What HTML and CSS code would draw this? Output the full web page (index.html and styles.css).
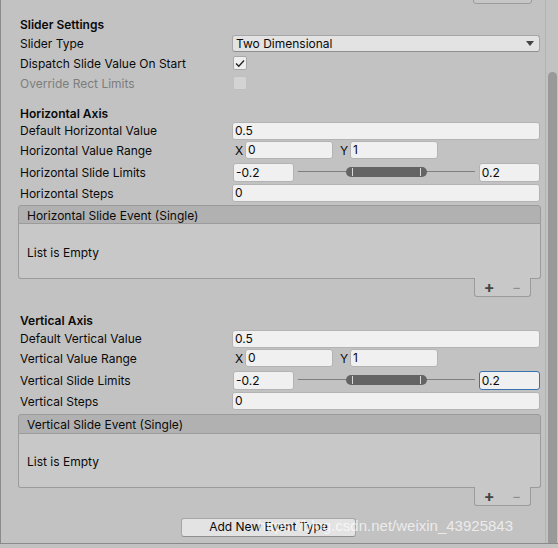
FILE: index.html
```html
<!DOCTYPE html>
<html lang="en">
<head>
    <meta charset="UTF-8">
    <title>Slider Settings</title>
    <link rel="stylesheet" href="styles.css">
</head>
<body>
    <div class="inspector">
        <div class="top-button"></div>

        <div class="content">
            <div class="section-title first">Slider Settings</div>
            <div class="row">
                <div class="label">Slider Type</div>
                <div class="dropdown">
                    <span>Two Dimensional</span>
                    <span class="arrow"></span>
                </div>
            </div>
            <div class="row">
                <div class="label">Dispatch Slide Value On Start</div>
                <div class="checkbox">
                    <svg width="10" height="9" viewBox="0 0 10 9"><path d="M1 4.5 L3.8 7.2 L9 1.5" fill="none" stroke="#222" stroke-width="1.3"/></svg>
                </div>
            </div>
            <div class="row">
                <div class="label disabled">Override Rect Limits</div>
                <div class="checkbox off"></div>
            </div>

            <!-- horizontal -->
            <div class="section-title axis">Horizontal Axis</div>
            <div class="row field-row">
                <div class="label">Default Horizontal Value</div>
                <div class="field wide">0.5</div>
            </div>
            <div class="row">
                <div class="label">Horizontal Value Range</div>
                <div class="range">
                    <span class="axis-letter">X</span><div class="field small">0</div>
                    <span class="axis-letter y">Y</span><div class="field small">1</div>
                </div>
            </div>
            <div class="row limits">
                <div class="label">Horizontal Slide Limits</div>
                <div class="field num">-0.2</div>
                <div class="minmax">
                    <div class="track"></div>
                    <div class="thumb"><i></i><i></i></div>
                </div>
                <div class="field num">0.2</div>
            </div>
            <div class="row">
                <div class="label">Horizontal Steps</div>
                <div class="field wide">0</div>
            </div>

            <div class="event">
                <div class="event-header">Horizontal Slide Event (Single)</div>
                <div class="event-body">List is Empty</div>
                <div class="event-footer"><span class="plus">+</span><span class="minus">&minus;</span></div>
            </div>

            <!-- vertical -->
            <div class="section-title axis vertical">Vertical Axis</div>
            <div class="row field-row">
                <div class="label">Default Vertical Value</div>
                <div class="field wide">0.5</div>
            </div>
            <div class="row">
                <div class="label">Vertical Value Range</div>
                <div class="range">
                    <span class="axis-letter">X</span><div class="field small">0</div>
                    <span class="axis-letter y">Y</span><div class="field small">1</div>
                </div>
            </div>
            <div class="row limits">
                <div class="label">Vertical Slide Limits</div>
                <div class="field num">-0.2</div>
                <div class="minmax">
                    <div class="track"></div>
                    <div class="thumb"><i></i><i></i></div>
                </div>
                <div class="field num focused">0.2</div>
            </div>
            <div class="row">
                <div class="label">Vertical Steps</div>
                <div class="field wide">0</div>
            </div>

            <div class="event second">
                <div class="event-header">Vertical Slide Event (Single)</div>
                <div class="event-body">List is Empty</div>
                <div class="event-footer"><span class="plus">+</span><span class="minus">&minus;</span></div>
            </div>

            <div class="add-button">Add New Event Type</div>
        </div>

        <div class="scrollbar"><div class="scroll-thumb"></div></div>
        <div class="watermark">https://blog.csdn.net/weixin_43925843</div>
    </div>
</body>
</html>
```

FILE: styles.css
```css
body {
    margin: 0;
    padding: 0;
    background-color: #c2c2c2;
    font-family: Inter, "Noto Sans", sans-serif;
    font-size: 12px;
    color: #0a0a0a;
}

.inspector {
    position: relative;
    width: 557px;
    height: 543px;
    border-left: 1px solid #8a8a8a;
    border-bottom: 1px solid #8a8a8a;
    overflow: hidden;
}

.top-button {
    position: absolute;
    top: -10px;
    left: 472px;
    width: 57px;
    height: 12px;
    border: 1px solid #9c9c9c;
    border-radius: 3px;
    background-color: #c6c6c6;
}

.content {
    width: 520px;
    padding: 15px 0 0 19px;
}

.section-title {
    font-weight: 600;
    height: 18px;
    line-height: 20px;
}

.section-title.axis {
    margin-top: 11px;
    height: 17px;
}

.section-title.vertical {
    margin-top: 14px;
    height: 18px;
}

.row {
    display: flex;
    align-items: center;
    height: 20px;
}

.row.field-row {
    height: 19px;
}

.row.limits {
    height: 22px;
    margin-top: 1px;
}

.label {
    width: 212px;
    flex-shrink: 0;
    white-space: nowrap;
}

.label.disabled {
    color: #7d7d7d;
}

.dropdown {
    flex: 1;
    height: 15px;
    display: flex;
    align-items: center;
    justify-content: space-between;
    padding: 0 5px 0 3px;
    background-color: #e3e3e3;
    border: 1px solid #a6a6a6;
    border-bottom-color: #8f8f8f;
    border-radius: 3px;
}

.arrow {
    width: 0;
    height: 0;
    border-left: 4px solid transparent;
    border-right: 4px solid transparent;
    border-top: 5px solid #444;
}

.checkbox {
    width: 12px;
    height: 12px;
    margin-left: 1px;
    background-color: #efefef;
    border: 1px solid #a8a8a8;
    border-radius: 2px;
    display: flex;
    align-items: center;
    justify-content: center;
}

.checkbox.off {
    background-color: #d3d3d3;
    border-color: #c0c0c0;
}

.field {
    height: 16px;
    line-height: 16px;
    padding-left: 2px;
    background-color: #f0f0f0;
    border: 1px solid #b3b3b3;
    border-radius: 3px;
    box-sizing: content-box;
}

.field.wide {
    flex: 1;
}

.range {
    display: flex;
    align-items: center;
}

.axis-letter {
    width: 12px;
    text-align: center;
    margin-left: 1px;
}

.axis-letter.y {
    margin-left: 5px;
}

.field.small {
    width: 84px;
}

.field.num {
    width: 58px;
    height: 17px;
    line-height: 17px;
    margin-left: 1px;
}

.field.focused {
    border-color: #3a72b0;
}

.minmax {
    position: relative;
    width: 179px;
    height: 12px;
    margin: 0 3px 0 4px;
}

.track {
    position: absolute;
    left: 0;
    right: 0;
    top: 5px;
    height: 1px;
    background-color: #7e7e7e;
}

.thumb {
    position: absolute;
    left: 48px;
    width: 81px;
    top: 1px;
    height: 10px;
    border-radius: 5px;
    background-color: #646464;
}

.thumb i {
    position: absolute;
    top: 1px;
    width: 1px;
    height: 8px;
    background-color: #d8d8d8;
    left: 6px;
}

.thumb i + i {
    left: auto;
    right: 6px;
}

.event {
    margin: 2px 0 0 -2px;
    width: 523px;
}

.event.second {
    margin-top: 3px;
}

.event-header {
    height: 17px;
    line-height: 19px;
    padding-left: 8px;
    background-color: #b1b1b1;
    border: 1px solid #9b9b9b;
    border-radius: 3px 3px 0 0;
}

.event.second .event-header {
    height: 18px;
}

.event-body {
    height: 54px;
    line-height: 58px;
    padding-left: 8px;
    background-color: #c8c8c8;
    border: 1px solid #9b9b9b;
    border-top: none;
    border-radius: 0 0 3px 3px;
}

.event.second .event-body {
    height: 53px;
    line-height: 55px;
}

.event-footer {
    width: 55px;
    height: 18px;
    margin: -1px 0 0 456px;
    display: flex;
    align-items: center;
    justify-content: space-around;
    background-color: #c8c8c8;
    border: 1px solid #9b9b9b;
    border-top: none;
    border-radius: 0 0 3px 3px;
    position: relative;
}

.plus {
    font-size: 16px;
    font-weight: 700;
    color: #444;
    line-height: 1;
}

.minus {
    font-size: 14px;
    color: #8f8f8f;
    line-height: 1;
}

.add-button {
    width: 173px;
    height: 17px;
    line-height: 16px;
    margin: 12px 0 0 161px;
    text-align: center;
    background-color: #e3e3e3;
    border: 1px solid #a6a6a6;
    border-bottom-color: #8f8f8f;
    border-radius: 3px;
}

.scrollbar {
    position: absolute;
    top: 0;
    left: 544px;
    width: 12px;
    height: 543px;
    border-left: 1px solid #b4b4b4;
    background-color: #c2c2c2;
}

.scroll-thumb {
    position: absolute;
    top: 72px;
    left: 2px;
    width: 9px;
    bottom: 0;
    background-color: #999999;
    border-radius: 5px 5px 0 0;
}

.watermark {
    position: absolute;
    right: 45px;
    top: 517px;
    font-family: "Liberation Sans", Arial, sans-serif;
    font-size: 15px;
    color: rgba(255, 255, 255, 0.7);
    white-space: nowrap;
}
```
